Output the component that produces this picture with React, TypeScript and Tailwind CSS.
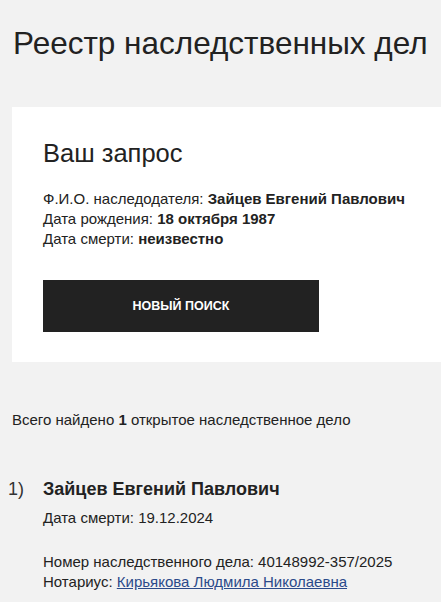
export default function App() {
  return (
    <div className="min-h-screen bg-[#f2f2f2] font-['Liberation_Sans',Arial,sans-serif] text-[#222]">
      <h1 className="px-[13px] pt-[23px] text-[31.5px] leading-[40px]">
        Реестр наследственных дел
      </h1>

      <div className="ml-[12px] mt-[44px] bg-white pb-[30px] pl-[31px] pt-[31px]">
        <h2 className="text-[25.5px] leading-[30px]">Ваш запрос</h2>
        <div className="mt-[21px] text-[15px] leading-[20px]">
          <p>
            Ф.И.О. наследодателя: <b>Зайцев Евгений Павлович</b>
          </p>
          <p>
            Дата рождения: <b>18 октября 1987</b>
          </p>
          <p>
            Дата смерти: <b>неизвестно</b>
          </p>
        </div>
        <button
          className="mt-[31px] flex h-[52px] w-[276px] items-center justify-center bg-[#222] text-[12.5px] font-bold uppercase text-white"
          type="button"
        >
          Новый поиск
        </button>
      </div>

      <p className="mt-[48px] px-[12px] text-[15px] leading-[20px]">
        Всего найдено <b>1</b> открытое наследственное дело
      </p>

      <div className="mt-[47px] flex">
        <span className="w-[43px] shrink-0 pl-[8px] text-[18px] leading-[24px] text-[#333]">1)</span>
        <div className="flex flex-col">
          <p className="text-[18px] font-bold leading-[24px]">Зайцев Евгений Павлович</p>
          <p className="mt-[7px] text-[15px] leading-[20px]">Дата смерти: 19.12.2024</p>
          <div className="mt-[24px] text-[15px] leading-[20px]">
            <p>Номер наследственного дела: 40148992-357/2025</p>
            <p>
              Нотариус:{" "}
              <a className="text-[#2b4a8a] underline" href="#">
                Кирьякова Людмила Николаевна
              </a>
            </p>
          </div>
        </div>
      </div>
    </div>
  );
}
